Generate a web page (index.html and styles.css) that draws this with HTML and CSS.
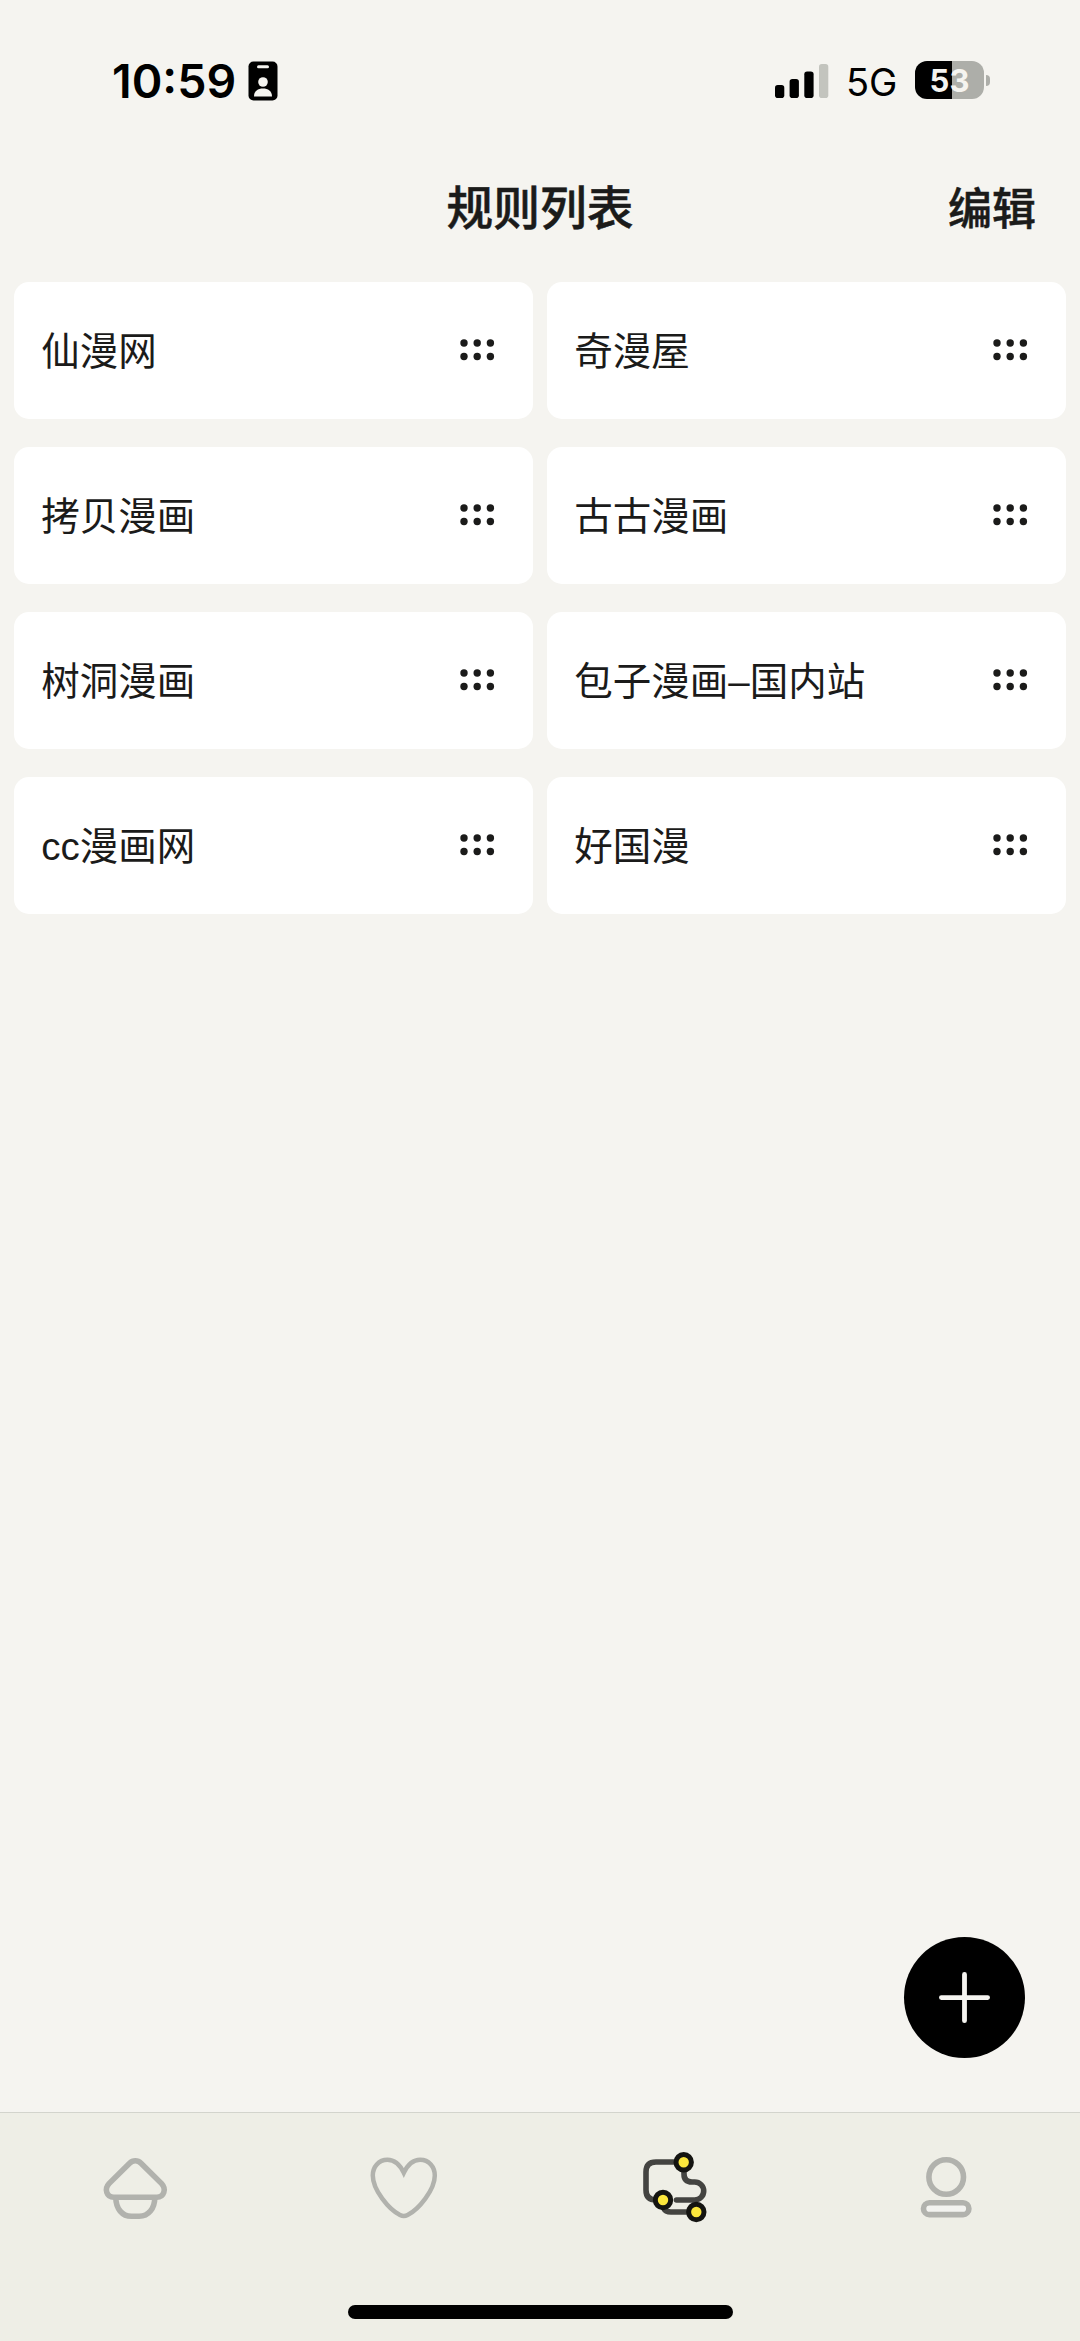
FILE: index.html
```html
<!DOCTYPE html>
<html lang="zh-CN">
<head>
    <meta charset="UTF-8">
    <meta name="viewport" content="width=device-width, initial-scale=1.0">
    <title>规则列表</title>
    <link rel="stylesheet" href="styles.css">
</head>
<body>
    <svg class="defs" width="0" height="0">
        <symbol id="drag" viewBox="0 0 36 24">
            <circle cx="4" cy="5" r="3.7"/>
            <circle cx="17.2" cy="5" r="3.7"/>
            <circle cx="30.4" cy="5" r="3.7"/>
            <circle cx="4" cy="18.5" r="3.7"/>
            <circle cx="17.2" cy="18.5" r="3.7"/>
            <circle cx="30.4" cy="18.5" r="3.7"/>
        </symbol>
    </svg>

    <div class="status-bar">
        <div class="status-left">
            <span class="time">10:59</span>
            <svg class="id-badge" width="30" height="40" viewBox="0 0 30 40">
                <rect x="0.5" y="0.5" width="29" height="39" rx="5" fill="#000"/>
                <rect x="9" y="4.3" width="12" height="3" rx="1.5" fill="#f5f4f0"/>
                <circle cx="15" cy="21" r="4.8" fill="#f5f4f0"/>
                <path d="M6 35.5 C6 30 10 27.5 15 27.5 C20 27.5 24 30 24 35.5 Z" fill="#f5f4f0"/>
            </svg>
        </div>
        <div class="status-right">
            <svg class="signal" width="54" height="36" viewBox="0 0 54 36">
                <rect x="0" y="22" width="9.3" height="13" rx="2.8"/>
                <rect x="14.6" y="16" width="9.3" height="19" rx="2.8"/>
                <rect x="29.3" y="8.5" width="9.3" height="26.5" rx="2.8"/>
                <rect x="44" y="1" width="9.3" height="34" rx="2.8" fill="#c3c4be"/>
            </svg>
            <span class="network">5G</span>
            <div class="battery"><span class="battery-level">53</span></div>
            <span class="battery-cap"></span>
        </div>
    </div>

    <header class="nav-bar">
        <h1>规则列表</h1>
        <button class="edit-btn">编辑</button>
    </header>

    <main class="rule-list">
        <div class="rule-card"><span>仙漫网</span><svg class="drag"><use href="#drag"/></svg></div>
        <div class="rule-card"><span>奇漫屋</span><svg class="drag"><use href="#drag"/></svg></div>
        <div class="rule-card"><span>拷贝漫画</span><svg class="drag"><use href="#drag"/></svg></div>
        <div class="rule-card"><span>古古漫画</span><svg class="drag"><use href="#drag"/></svg></div>
        <div class="rule-card"><span>树洞漫画</span><svg class="drag"><use href="#drag"/></svg></div>
        <div class="rule-card"><span>包子漫画–国内站</span><svg class="drag"><use href="#drag"/></svg></div>
        <div class="rule-card"><span>cc漫画网</span><svg class="drag"><use href="#drag"/></svg></div>
        <div class="rule-card"><span>好国漫</span><svg class="drag"><use href="#drag"/></svg></div>
    </main>

    <button class="add-btn" aria-label="添加">
        <svg width="52" height="52" viewBox="0 0 52 52">
            <path d="M25.5 2.5 V48.7 M2.4 25.6 H48.6" stroke="#f5f4f0" stroke-width="4.8" stroke-linecap="round"/>
        </svg>
    </button>

    <footer class="tab-bar">
        <nav class="tabs">
            <a class="tab">
                <svg width="80" height="80" viewBox="0 0 80 80">
                    <path d="M34.6 13.2 L14 33.6 C9 39 11.5 47.3 18.8 47.3 H61.8 C69.1 47.3 71.6 39 66.6 33.6 L46 13.2 C42.8 10 37.8 10 34.6 13.2 Z"/>
                    <path d="M20.8 48 C21 58.5 27 66.3 36.5 66.3 H44.2 C53.6 66.3 59.6 58.5 59.8 48"/>
                </svg>
            </a>
            <a class="tab">
                <svg class="heart" width="80" height="80" viewBox="0 0 80 80">
                    <path d="M38.8 22.8 C35 15 29.5 9.8 22.5 9.8 C13.5 9.8 7.8 17 7.8 25.5 C7.8 40 24 59.5 35 65 Q38.8 67 42.6 65 C53.6 59.5 69.8 40 69.8 25.5 C69.8 17 64.1 9.8 55.1 9.8 C48.1 9.8 42.6 15 38.8 22.8 Z"/>
                </svg>
            </a>
            <a class="tab active">
                <svg width="80" height="80" viewBox="0 0 80 80">
                    <path d="M48.7 12 H21 Q11 12 11 22 V40 Q11 50 21 50"/>
                    <path d="M49 20 V24 Q49 32 57 32 H59.7 A9 9 0 0 1 59.7 50 H41.5"/>
                    <path d="M28.5 58 Q30.5 62 36 62 H54"/>
                    <g class="node">
                        <circle cx="48.7" cy="12.3" r="7.7"/>
                        <circle cx="28" cy="50" r="7.7"/>
                        <circle cx="61.3" cy="62" r="7.7"/>
                    </g>
                </svg>
            </a>
            <a class="tab">
                <svg width="80" height="80" viewBox="0 0 80 80">
                    <circle cx="41.2" cy="27" r="17.3"/>
                    <rect x="18.5" y="52.8" width="45.4" height="11.8" rx="5.9" class="base"/>
                </svg>
            </a>
        </nav>
        <div class="home-indicator"></div>
    </footer>
</body>
</html>
```

FILE: styles.css
```css
:root {
    --bg-color: #f5f4f0;
    --bar-color: #eeeee6;
    --text-color: #1b1b1a;
    --muted-color: #b1b2ad;
}

* {
    margin: 0;
    padding: 0;
    box-sizing: border-box;
}

body {
    background-color: var(--bg-color);
    color: var(--text-color);
    font-family: 'Liberation Sans', 'Noto Sans CJK SC', sans-serif;
    height: 2341px;
    display: flex;
    flex-direction: column;
    overflow: hidden;
}

button {
    border: none;
    background: none;
    color: inherit;
    font-family: inherit;
}

.defs {
    position: absolute;
}

/* Status bar */
.status-bar {
    height: 147px;
    padding: 61px 90px 0 112px;
    display: flex;
    justify-content: space-between;
    align-items: flex-start;
    font-family: Inter, sans-serif;
    color: #000;
}

.status-left,
.status-right {
    display: flex;
    align-items: center;
    height: 40px;
}

.time {
    font-size: 46.5px;
    font-weight: 600;
    width: 136px;
    white-space: nowrap;
}

.signal {
    margin-right: 17px;
}

.network {
    font-size: 38px;
    width: 69px;
    margin-top: 1px;
}

.battery {
    width: 69px;
    height: 38px;
    margin-top: -2px;
    border-radius: 12px;
    background: linear-gradient(to right, #000 37px, #adaea9 37px);
    display: flex;
    align-items: center;
    justify-content: center;
}

.battery-level {
    color: #f5f4f0;
    font-size: 31px;
    font-weight: 700;
}

.battery-cap {
    width: 4px;
    height: 11px;
    margin: -1px 0 0 2px;
    border-radius: 0 4px 4px 0;
    background-color: #adaea9;
}

/* Title */
.nav-bar {
    height: 121px;
    padding: 4px 44px 0 0;
    display: grid;
    grid-template-columns: 1fr auto 1fr;
    align-items: center;
    line-height: 1.4;
    -webkit-text-stroke: 0.5px var(--text-color);
}

.nav-bar h1 {
    grid-column: 2;
    margin-left: 44px;
    font-size: 46.7px;
    font-weight: 500;
}

.edit-btn {
    justify-self: end;
    font-size: 44px;
    font-weight: 500;
    line-height: 1.4;
}

/* Rules */
.rule-list {
    padding: 14px 13.7px 0;
    display: grid;
    grid-template-columns: 1fr 1fr;
    gap: 27.5px 13.7px;
}

.rule-card {
    height: 137.4px;
    padding: 3px 37px 0 27.5px;
    border-radius: 15px;
    background-color: #fff;
    display: flex;
    align-items: center;
    justify-content: space-between;
    font-size: 38.5px;
    line-height: 1.4;
    white-space: nowrap;
}

.drag {
    width: 36px;
    height: 24px;
    margin-bottom: 4px;
    fill: var(--text-color);
}

/* Add button */
.add-btn {
    width: 121px;
    height: 121px;
    margin: auto 55px 54px auto;
    border-radius: 50%;
    background-color: #000;
    display: flex;
    align-items: center;
    justify-content: center;
}

/* Tabs */
.tab-bar {
    height: 229px;
    border-top: 1px solid #d3d4cd;
    background-color: var(--bar-color);
    display: flex;
    flex-direction: column;
    justify-content: space-between;
    align-items: center;
    padding: 37px 0 22px;
}

.tabs {
    width: 100%;
    display: grid;
    grid-template-columns: repeat(4, 1fr);
    justify-items: center;
}

.tab svg {
    display: block;
    fill: none;
    stroke: var(--muted-color);
    stroke-width: 5.6;
}

.tab .heart {
    stroke-width: 4.5;
}

.tab .base {
    fill: #f3f3f0;
}

.tab.active svg {
    stroke: #444441;
    stroke-linecap: round;
}

.tab.active .node {
    fill: #fbe63c;
    stroke: #141411;
    stroke-width: 5;
}

.home-indicator {
    width: 385px;
    height: 14px;
    border-radius: 7px;
    background-color: #000;
}
```
